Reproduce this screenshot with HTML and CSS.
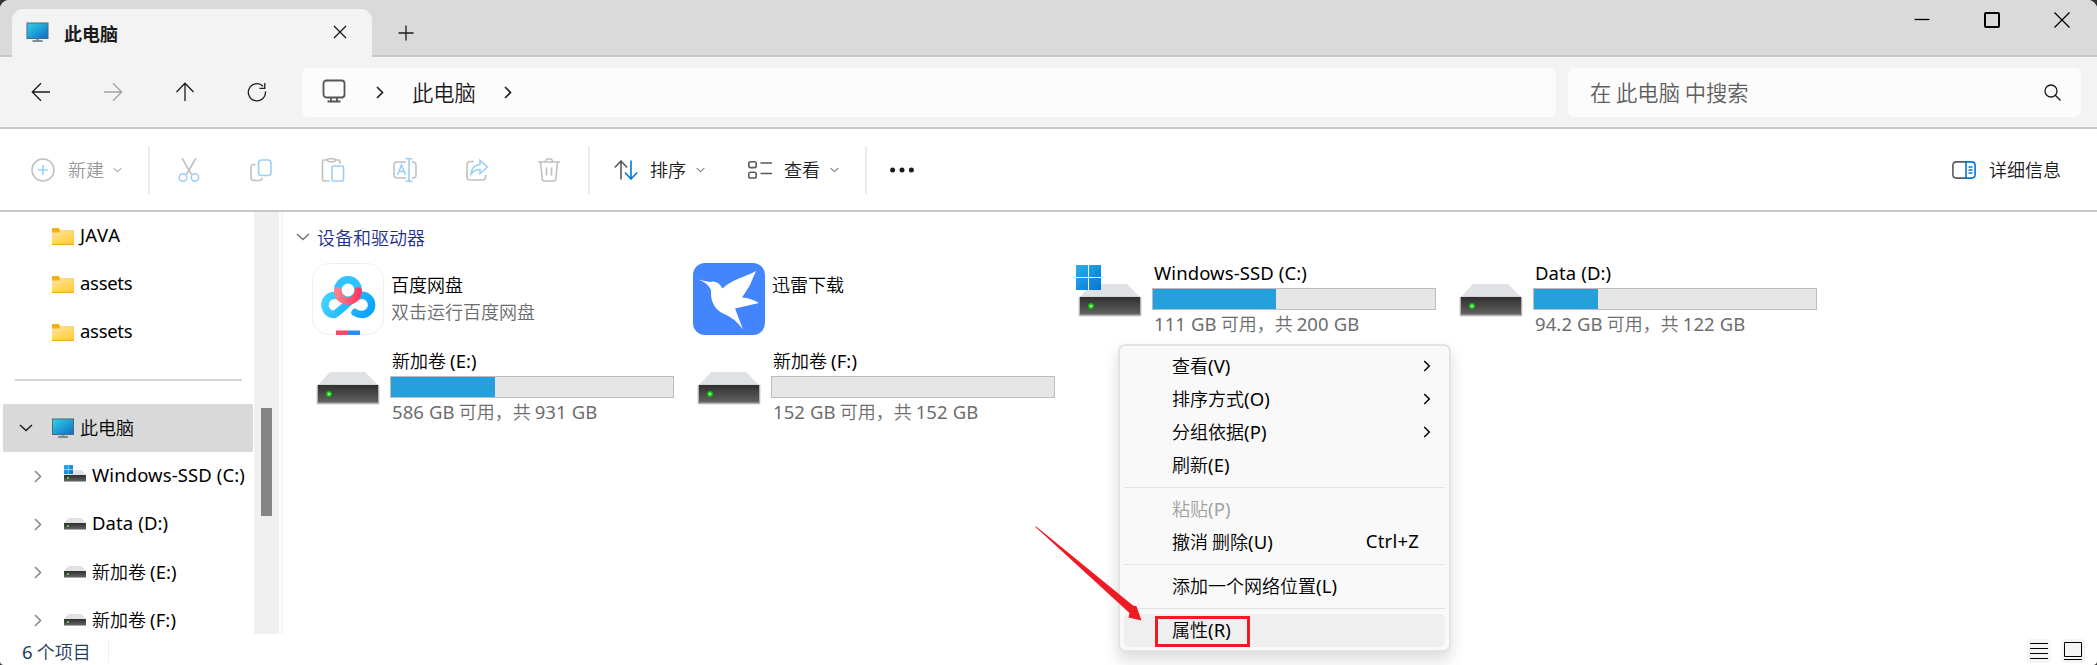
FILE: index.html
```html
<!DOCTYPE html>
<html lang="zh-CN">
<head>
<meta charset="utf-8">
<title>此电脑</title>
<link rel="stylesheet" href="styles.css">
</head>
<body>
<svg class="defs" width="0" height="0" aria-hidden="true">
  <defs>
    <linearGradient id="screen" x1="0" y1="0" x2="1" y2="1"><stop offset="0" stop-color="#35d3e6"/><stop offset="1" stop-color="#0c6cc4"/></linearGradient>
    <linearGradient id="folder" x1="0" y1="0" x2="1" y2="1"><stop offset="0" stop-color="#ffe69a"/><stop offset="1" stop-color="#ffc937"/></linearGradient>
    <linearGradient id="front" x1="0" y1="0" x2="0" y2="1"><stop offset="0" stop-color="#2f2f2f"/><stop offset="1" stop-color="#626262"/></linearGradient>
    <linearGradient id="pane" x1="0" y1="0" x2="1" y2="1"><stop offset="0" stop-color="#2ab0ee"/><stop offset="1" stop-color="#0673cf"/></linearGradient>
    <linearGradient id="cloud" gradientUnits="userSpaceOnUse" x1="9" y1="20" x2="63" y2="50"><stop offset="0" stop-color="#4fdcff"/><stop offset="1" stop-color="#069dff"/></linearGradient>
    <linearGradient id="rose" x1="0" y1="0" x2="1" y2="0"><stop offset="0" stop-color="#ff8088"/><stop offset="1" stop-color="#fb3a62"/></linearGradient>
    <symbol id="i-pc" viewBox="0 0 22 20"><rect x=".5" y="1" width="21" height="15.5" fill="url(#screen)" stroke="#4b6b7c"/><path d="M9.5 17h3v1.5h-3z" fill="#9aa3aa"/><path d="M6 19h10" stroke="#5b6e7c" stroke-width="1.4"/></symbol>
    <symbol id="i-folder" viewBox="0 0 22 17"><path d="M0 1q0-1 1-1h6l1 2.500h14V17H0z" fill="#f6ae16"/><path d="M0 4.500h7L8.500 3H22v12.800H0z" fill="url(#folder)"/></symbol>
    <symbol id="i-hdd" viewBox="0 0 22 12"><path d="M4.500 0h13L22 5H0z" fill="#e1e2e5"/><path d="M0 5h22v7H0z" fill="#aaa"/><path d="M0 5h22v6H0z" fill="url(#front)"/><path d="M3 7h2v2H3z" fill="#33e02c"/></symbol>
    <symbol id="i-drive" viewBox="0 0 64 34"><path d="M14 1h35l13 13H2z" fill="#e0e1e5"/><rect x=".7" y="13.700" width="62.600" height="19.600" rx="1" fill="#b2b2b2"/><path d="M2 14h60v17.500H2z" fill="url(#front)"/><circle cx="13" cy="23" r="3" fill="#18b81a"/><circle cx="13" cy="23" r="1.500" fill="#7dff70"/></symbol>
    <symbol id="i-win" viewBox="0 0 24 24"><path d="M0 0h11.500v11.500H0zM12.500 0H24v11.500H12.500zM0 12.500h11.500V24H0zM12.500 12.500H24V24H12.500z" fill="url(#pane)"/></symbol>
    <symbol id="i-right" viewBox="0 0 8 13"><path d="M1 1l5.500 5.500L1 12" fill="none" stroke="currentColor" stroke-width="1.600"/></symbol>
    <symbol id="i-down" viewBox="0 0 14 8"><path d="M1 1l6 5.500L13 1" fill="none" stroke="currentColor" stroke-width="1.600"/></symbol>
  </defs>
</svg>

<div class="window">
  <header class="titlebar">
    <div class="tab">
      <svg class="tab-icon"><use href="#i-pc"/></svg>
      <span class="tab-name">此电脑</span>
      <svg class="ico tab-close" viewBox="0 0 14 14"><path d="M1 1l12 12M13 1L1 13"/></svg>
    </div>
    <svg class="ico tab-new" viewBox="0 0 16 16"><path d="M8 .5v15M.5 8h15"/></svg>
    <div class="controls">
      <svg class="ico" viewBox="0 0 16 16"><path d="M.5 7.500h15"/></svg>
      <svg class="ico bold" viewBox="0 0 16 16"><rect x="1" y="1" width="14" height="14" rx="1"/></svg>
      <svg class="ico" viewBox="0 0 16 16"><path d="M.5 .5l15 15M15.500 .5l-15 15"/></svg>
    </div>
  </header>

  <nav class="navbar">
    <div class="nav-buttons">
      <svg class="ico" viewBox="0 0 20 20"><path d="M19 10H1.500M10 1.200L1.300 10l8.700 8.800"/></svg>
      <svg class="ico off" viewBox="0 0 20 20"><path d="M1 10h17.500M10 1.200l8.700 8.800-8.700 8.800"/></svg>
      <svg class="ico" viewBox="0 0 20 20"><path d="M10 19V1.500M1.500 10L10 1.300l8.500 8.700"/></svg>
      <svg class="ico" viewBox="0 0 20 20"><path d="M18.500 9.500A8.600 8.600 0 1 1 16 4.200M17.800 1v5.300h-5.300"/></svg>
    </div>
    <div class="address">
      <svg class="ico monitor" viewBox="0 0 24 24"><rect x="1.500" y="1.500" width="21" height="17" rx="3"/><path d="M9 18.500v3.500M15 18.500v3.500M5.500 22.500h13"/></svg>
      <svg class="crumb-sep"><use href="#i-right"/></svg>
      <span class="crumb">此电脑</span>
      <svg class="crumb-sep"><use href="#i-right"/></svg>
    </div>
    <div class="search">
      <span>在 此电脑 中搜索</span>
      <svg class="ico" viewBox="0 0 17 17"><circle cx="7" cy="7" r="6"/><path d="M11.300 11.300L16.500 16.500"/></svg>
    </div>
  </nav>

  <div class="toolbar">
    <div class="tool new">
      <svg class="ico" viewBox="0 0 24 24"><circle cx="12" cy="12" r="11" class="g"/><path class="b" d="M12 7v10M7 12h10"/></svg>
      <span>新建</span>
      <svg class="caret"><use href="#i-down"/></svg>
    </div>
    <i class="sep"></i>
    <div class="edit">
      <svg class="ico" viewBox="0 0 24 24"><path class="g" d="M5 0l9.500 16.500M19 0L9.500 16.500"/><circle class="b" cx="6" cy="19.500" r="3.700"/><circle class="b" cx="18" cy="19.500" r="3.700"/></svg>
      <svg class="ico" viewBox="0 0 24 24"><path class="g" d="M6.500 6.500H5Q2 6.500 2 9.500v9.500q0 3.500 3.500 3.500H10q2.500 0 3.500-2.500"/><rect class="b" x="9.500" y="2" width="12.500" height="15.500" rx="3"/></svg>
      <svg class="ico" viewBox="0 0 24 24"><path class="g" d="M6 2H2.500Q1.500 2 1.500 3.500V21.500Q1.500 23 3 23H8.500M14 2h3.500q1.300 0 1.300 1.500V6"/><rect class="g" x="6.500" y=".8" width="7.500" height="3" rx="1.500"/><rect class="b" x="11" y="8" width="11.500" height="15" rx="1.500"/></svg>
      <svg class="ico" viewBox="0 0 24 24"><path class="g" d="M13 4H4Q1 4 1 7v10q0 3 3 3h9M19 4h1q3 0 3 3v10q0 3-3 3h-1"/><path class="b" d="M4.500 17L8.500 7l4 10M6 13.500h5M16 1v22M12.500 .8h7M12.500 23.200h7"/></svg>
      <svg class="ico" viewBox="0 0 24 24"><path class="g" d="M9 3.500H5.500Q2 3.500 2 7v12q0 3 3 3h12.500q3 0 3-3V17"/><path class="b" d="M15 2.300L22.500 9l-7.500 6.500v-4Q10 11 6 16 7 7 15 6.500z"/></svg>
      <svg class="ico" viewBox="0 0 24 24"><path class="g" d="M1 4h22M8.500 4Q8.500 .8 12 .8T15.500 4M3.500 4l1.700 17q.2 2 2.300 2h9q2.100 0 2.300-2L20.500 4M9.500 9.500v8M14.500 9.500v8"/></svg>
    </div>
    <i class="sep"></i>
    <div class="tool sort">
      <svg class="ico" viewBox="0 0 24 20"><path class="d" d="M7 19.500V1M.8 7.500L7 1l6 6.500"/><path class="p" d="M17 .5V19M11 12.500l6 6.500 6.200-6.500"/></svg>
      <span>排序</span>
      <svg class="caret"><use href="#i-down"/></svg>
    </div>
    <div class="tool view">
      <svg class="ico" viewBox="0 0 24 20"><rect class="d" x=".8" y="1.800" width="7.400" height="5.800" rx="1.800"/><rect class="d" x=".8" y="12.200" width="7.400" height="5.800" rx="1.800"/><path class="d" d="M12.500 3H24M12.500 13.500H24"/></svg>
      <span>查看</span>
      <svg class="caret"><use href="#i-down"/></svg>
    </div>
    <i class="sep"></i>
    <svg class="more" viewBox="0 0 24 6"><circle cx="2.600" cy="3" r="2.500"/><circle cx="12" cy="3" r="2.500"/><circle cx="21.400" cy="3" r="2.500"/></svg>
    <div class="details">
      <svg class="ico" viewBox="0 0 24 18"><path class="d" d="M14 .9H4.500Q.9 .9 .9 4.500v9q0 3.600 3.600 3.600H14"/><path class="p" d="M14 .9h5.500q3.600 0 3.600 3.600v9q0 3.600-3.600 3.600H14zM16.500 6h4M16.500 9h4M16.500 12h4"/></svg>
      <span>详细信息</span>
    </div>
  </div>

  <div class="body">
    <aside class="side">
      <div class="node pinned"><svg class="folder"><use href="#i-folder"/></svg><span class="l caps">JAVA</span></div>
      <div class="node pinned"><svg class="folder"><use href="#i-folder"/></svg><span class="l lower">assets</span></div>
      <div class="node pinned"><svg class="folder"><use href="#i-folder"/></svg><span class="l lower">assets</span></div>
      <hr>
      <div class="node root"><svg class="expand"><use href="#i-down"/></svg><svg class="pc"><use href="#i-pc"/></svg><span>此电脑</span></div>
      <div class="node child"><svg class="arrow"><use href="#i-right"/></svg><svg class="hdd tall" viewBox="0 0 22 17"><use href="#i-hdd" y="5" width="22" height="12"/><path d="M0 0h9v9H0z" fill="#fff"/><use href="#i-win" width="9" height="9"/></svg><span class="l">Windows-SSD (C:)</span></div>
      <div class="node child"><svg class="arrow"><use href="#i-right"/></svg><svg class="hdd"><use href="#i-hdd"/></svg><span class="l">Data (D:)</span></div>
      <div class="node child"><svg class="arrow"><use href="#i-right"/></svg><svg class="hdd"><use href="#i-hdd"/></svg><span>新加卷 <b class="l">(E:)</b></span></div>
      <div class="node child"><svg class="arrow"><use href="#i-right"/></svg><svg class="hdd"><use href="#i-hdd"/></svg><span>新加卷 <b class="l">(F:)</b></span></div>
    </aside>
    <div class="scroll"><div class="thumb"></div></div>

    <main class="content">
      <div class="group"><svg><use href="#i-down"/></svg><span>设备和驱动器</span></div>
      <div class="grid">
        <div class="item app">
          <svg class="app-icon" viewBox="0 0 72 72">
            <rect x=".5" y=".5" width="71" height="71" rx="16" fill="#fff" stroke="#eee"/>
            <g fill="none" stroke-width="7.500" stroke-linecap="round">
              <path d="M43 49.500Q46 51.500 50 51.500A9.600 9.600 0 0 0 50 32.300Q44 32.300 36 40T22.500 51.500A9.600 9.600 0 1 1 29 34.800" stroke="url(#cloud)"/>
              <circle cx="36" cy="27" r="10.200" stroke="#30c3ff"/>
              <path d="M25.800 28A10.200 10.200 0 0 0 46.200 28" stroke="url(#rose)"/>
            </g>
            <path d="M24 67.500h12V72H24z" fill="#ff4766"/><path d="M36 67.500h12V72H36z" fill="#268dff"/>
          </svg>
          <div class="info"><p class="name">百度网盘</p><p class="sub">双击运行百度网盘</p></div>
        </div>
        <div class="item app">
          <svg class="app-icon" viewBox="0 0 72 72"><rect width="72" height="72" rx="12" fill="#4285ff"/><path d="M4.500 16.500L17 19Q25 17 29.500 25.500C38 17 52 14 63 8L58 19.500 56.500 23 49 34.500Q58 35 66 40L42 45.500 50 66.500Q42 55 30 50.500 17 44 18 27 14 18.500 4.500 16.500z" fill="#fff"/></svg>
          <div class="info"><p class="name">迅雷下载</p></div>
        </div>
        <div class="item">
          <svg class="drive sys" viewBox="0 0 64 52"><use href="#i-drive" y="18" width="64" height="34"/></svg><svg class="logo"><use href="#i-win"/></svg>
          <div class="info"><p class="name l">Windows-SSD (C:)</p><div class="bar"><div style="width:43.700%"></div></div><p class="sub"><b class="l">111 GB</b> 可用，共 <b class="l">200 GB</b></p></div>
        </div>
        <div class="item">
          <svg class="drive"><use href="#i-drive"/></svg>
          <div class="info"><p class="name l">Data (D:)</p><div class="bar"><div style="width:22.800%"></div></div><p class="sub"><b class="l">94.2 GB</b> 可用，共 <b class="l">122 GB</b></p></div>
        </div>
        <div class="item">
          <svg class="drive"><use href="#i-drive"/></svg>
          <div class="info"><p class="name">新加卷 <b class="l">(E:)</b></p><div class="bar"><div style="width:37%"></div></div><p class="sub"><b class="l">586 GB</b> 可用，共 <b class="l">931 GB</b></p></div>
        </div>
        <div class="item">
          <svg class="drive"><use href="#i-drive"/></svg>
          <div class="info"><p class="name">新加卷 <b class="l">(F:)</b></p><div class="bar"></div><p class="sub"><b class="l">152 GB</b> 可用，共 <b class="l">152 GB</b></p></div>
        </div>
      </div>
    </main>
  </div>

  <footer class="status">
    <span class="count"><b class="l">6</b> 个项目</span>
    <svg class="mode" viewBox="0 0 24 24"><rect width="24" height="24" rx="3" fill="#f5f5f5"/><path d="M3 4.500h18M3 9.500h18M3 14.500h18M3 19.500h18" stroke="#000"/></svg>
    <svg class="mode" viewBox="0 0 24 24"><rect width="24" height="24" rx="3" fill="#f5f5f5"/><path d="M3.500 3.500h17v14h-17zM3 20.500h18" fill="none" stroke="#000"/></svg>
  </footer>
</div>

<div class="menu">
  <div class="mi"><span>查看<b class="l">(V)</b></span><svg><use href="#i-right"/></svg></div>
  <div class="mi"><span>排序方式<b class="l">(O)</b></span><svg><use href="#i-right"/></svg></div>
  <div class="mi"><span>分组依据<b class="l">(P)</b></span><svg><use href="#i-right"/></svg></div>
  <div class="mi"><span>刷新<b class="l">(E)</b></span></div>
  <hr>
  <div class="mi disabled"><span>粘贴<b class="l">(P)</b></span></div>
  <div class="mi"><span>撤消 删除<b class="l">(U)</b></span><span class="key l">Ctrl+Z</span></div>
  <hr>
  <div class="mi"><span>添加一个网络位置<b class="l">(L)</b></span></div>
  <hr>
  <div class="mi hover"><span>属性<b class="l">(R)</b></span></div>
</div>
<div class="mark"></div>
<svg class="pointer" viewBox="0 0 108 96"><path d="M.2 .8L.9 .2 98 79.500 101.500 80.200 106.500 94.500 93.500 91.500 94.500 87z" fill="#ed1c24"/></svg>
</body>
</html>
```
FILE: styles.css
```css
* { box-sizing: border-box; }
body {
  margin: 0;
  width: 2097px;
  height: 665px;
  overflow: hidden;
  background: #333;
  color: #000;
  font: 350 18px/24px "Noto Sans CJK SC", sans-serif;
}
svg { display: block; flex: none; }
p { margin: 0; }
span, p { white-space: nowrap; }
b { font-weight: inherit; }
.defs { position: absolute; }
.l { font-family: "Noto Sans", "Noto Sans CJK SC", sans-serif; font-size: 18.5px; letter-spacing: .1px; font-weight: 400; line-height: 20px; }
.caps { font-kerning: none; }
.lower { letter-spacing: -.3px; }

.window {
  display: flex;
  flex-direction: column;
  height: 665px;
  background: #fff;
  border-radius: 9px 9px 4px 4px;
  overflow: hidden;
}
.ico { fill: none; stroke: #1b1b1b; stroke-width: 1.3; }
.ico.bold { stroke-width: 2; }
.ico.off { stroke: #a3a3a3; }

/* title bar */
.titlebar {
  display: flex;
  height: 57px;
  padding-left: 12px;
  background: #dadada;
  border-bottom: 2px solid #c8c8c8;
}
.tab {
  display: flex;
  align-items: center;
  width: 360px;
  height: 48px;
  margin-top: 9px;
  padding: 0 25px 2px 14px;
  background: #f3f3f3;
  border-radius: 11px 11px 0 0;
}
.tab-icon { width: 23px; height: 20px; }
.tab-name { flex: 1; margin-left: 15px; padding-top: 1px; font-weight: 700; color: #1b1b1b; }
.tab-close { width: 14px; height: 14px; }
.tab-new { width: 16px; height: 16px; margin: 25px 0 0 26px; }
.controls { display: flex; gap: 54px; margin: 12px 27px 0 auto; }
.controls .ico { width: 16px; height: 16px; stroke: #000; }

/* navigation */
.navbar {
  display: flex;
  align-items: center;
  height: 72px;
  padding: 0 16px 0 31px;
  background: #f3f3f3;
  border-bottom: 2px solid #c8c8c8;
}
.nav-buttons { display: flex; gap: 52px; width: 271px; }
.nav-buttons .ico { width: 20px; height: 20px; }
.address, .search {
  display: flex;
  align-items: center;
  height: 49px;
  background: #fcfcfc;
  border-radius: 6px;
  font-size: 21.3px;
}
.address { width: 1254px; padding-left: 20px; }
.monitor { width: 24px; height: 24px; stroke: #555; stroke-width: 1.8; margin: 0 30px 2px 0; }
.crumb-sep { width: 8px; height: 13px; color: #1b1b1b; }
.crumb { margin: 0 28px; color: #1b1b1b; }
.search { flex: 1; justify-content: space-between; margin-left: 12px; padding: 0 20px 0 22px; color: #5f5f5f; }
.search .ico { width: 17px; height: 17px; }

/* command bar */
.toolbar {
  display: flex;
  align-items: center;
  height: 83px;
  padding: 0 36px 0 31px;
  border-bottom: 2px solid #c8c8c8;
}
.tool, .details { display: flex; align-items: center; }
.tool span, .details span { padding-bottom: 1px; }
.toolbar .ico { width: 24px; height: 24px; stroke-width: 1.6; }
.g { stroke: #c0c0c0; }
.b { stroke: #9ccff5; }
.d { stroke: #5a5a5a; }
.p { stroke: #0078d4; }
.sep { width: 2px; height: 48px; background: #ebebeb; }
.caret { width: 9px; height: 6px; color: #777; }
.new { width: 117px; color: #999; }
.new span { margin: 0 9px 0 13px; }
.new .caret { color: #aaa; }
.edit { display: flex; gap: 48px; width: 438px; padding-left: 27px; }
.toolbar .sort .ico, .toolbar .view .ico { height: 20px; }
.sort { width: 158px; padding-left: 24px; }
.view { width: 117px; }
.sort span, .view span { margin: 0 10px 0 12px; color: #1b1b1b; }
.more { width: 24px; height: 6px; margin-left: 23px; fill: #1b1b1b; }
.details { margin-left: auto; gap: 13px; color: #1b1b1b; }
.toolbar .details .ico { height: 18px; }

/* body */
.body { display: flex; height: 422px; }
.side { width: 254px; }
.node { display: flex; align-items: center; height: 48px; }
.node span { padding-bottom: 2px; }
.pinned { padding-left: 52px; }
.folder { width: 22px; height: 17px; margin-right: 6px; }
.side hr { width: 227px; height: 2px; margin: 23px 0 23px 15px; border: 0; background: #d4d4d4; }
.root { width: 250px; margin-left: 3px; padding-left: 16px; background: #d9d9d9; border-radius: 2px; }
.expand { width: 14px; height: 8px; margin-right: 19px; color: #222; }
.pc { width: 22px; height: 20px; margin-right: 6px; }
.child { padding-left: 34px; }
.arrow { width: 8px; height: 13px; margin-right: 22px; color: #888; }
.hdd { width: 22px; height: 12px; margin-right: 6px; }
.hdd.tall { height: 17px; margin-top: -5px; }
.scroll { width: 25px; padding: 196px 7px 0; background: #f0f0f0; }
.thumb { width: 11px; height: 108px; background: #858585; }
.content { flex: 1; margin-left: 2px; padding: 13px 0 0 13px; border-left: 2px solid #f5f5f5; }
.group { display: flex; align-items: center; gap: 7px; color: #1e2f8c; }
.group svg { width: 14px; height: 8px; color: #777; }
.grid { display: grid; grid-template-columns: repeat(4, 381px); grid-auto-rows: 88px; padding: 11px 0 0 14px; }
.item { display: flex; position: relative; }
.app-icon { width: 72px; height: 72px; margin: 3px 6px 0 2px; }
.app .info { margin-top: 12px; padding-left: 1px; }
.app .sub { margin-top: 3px; }
.name { height: 24px; }
.name.l { line-height: 26px; }
.drive { width: 64px; height: 34px; margin: 23px 10px 0 6px; }
.drive.sys { height: 52px; margin-top: 5px; }
.logo { position: absolute; left: 4px; top: 5px; width: 25px; height: 25px; background: #fff; }
.bar { width: 284px; height: 22px; margin: 4px 0 1px; background: #e6e6e6; border: 1px solid #bcbcbc; }
.bar div { height: 100%; background: #26a0da; }
.item:not(.app) p { padding-left: 2px; }
.sub { color: #6d6d6d; }

/* status bar */
.status { display: flex; align-items: flex-start; gap: 10px; height: 31px; padding: 5px 12px 0 22px; color: #1e395b; }
.count { width: 87px; height: 24px; margin-right: auto; border-right: 1px solid #eee; }
.mode { width: 24px; height: 24px; }

/* context menu over the content */
.menu {
  position: absolute;
  left: 1118px;
  top: 344px;
  width: 333px;
  height: 308px;
  padding: 4px;
  background: #f9f9f9;
  border: 2px solid #e3e3e3;
  border-radius: 7px;
  box-shadow: 0 8px 16px rgba(0, 0, 0, .14);
}
.mi { display: flex; align-items: center; justify-content: space-between; height: 33px; padding: 0 14px 0 48px; border-radius: 5px; }
.mi span { padding-bottom: 4px; }
.mi svg { width: 8px; height: 12px; margin-bottom: 2px; }
.mi .key { padding-right: 12px; letter-spacing: .2px; }
.disabled { color: #a2a2a2; }
.menu hr { height: 1px; margin: 5px 0; border: 0; background: #e2e2e2; }
.hover { background: #efefef; }

/* annotations */
.mark { position: absolute; left: 1155px; top: 616px; width: 95px; height: 31px; border: 3px solid #ed1c24; }
.pointer { position: absolute; left: 1035px; top: 526px; width: 108px; height: 96px; }
```
